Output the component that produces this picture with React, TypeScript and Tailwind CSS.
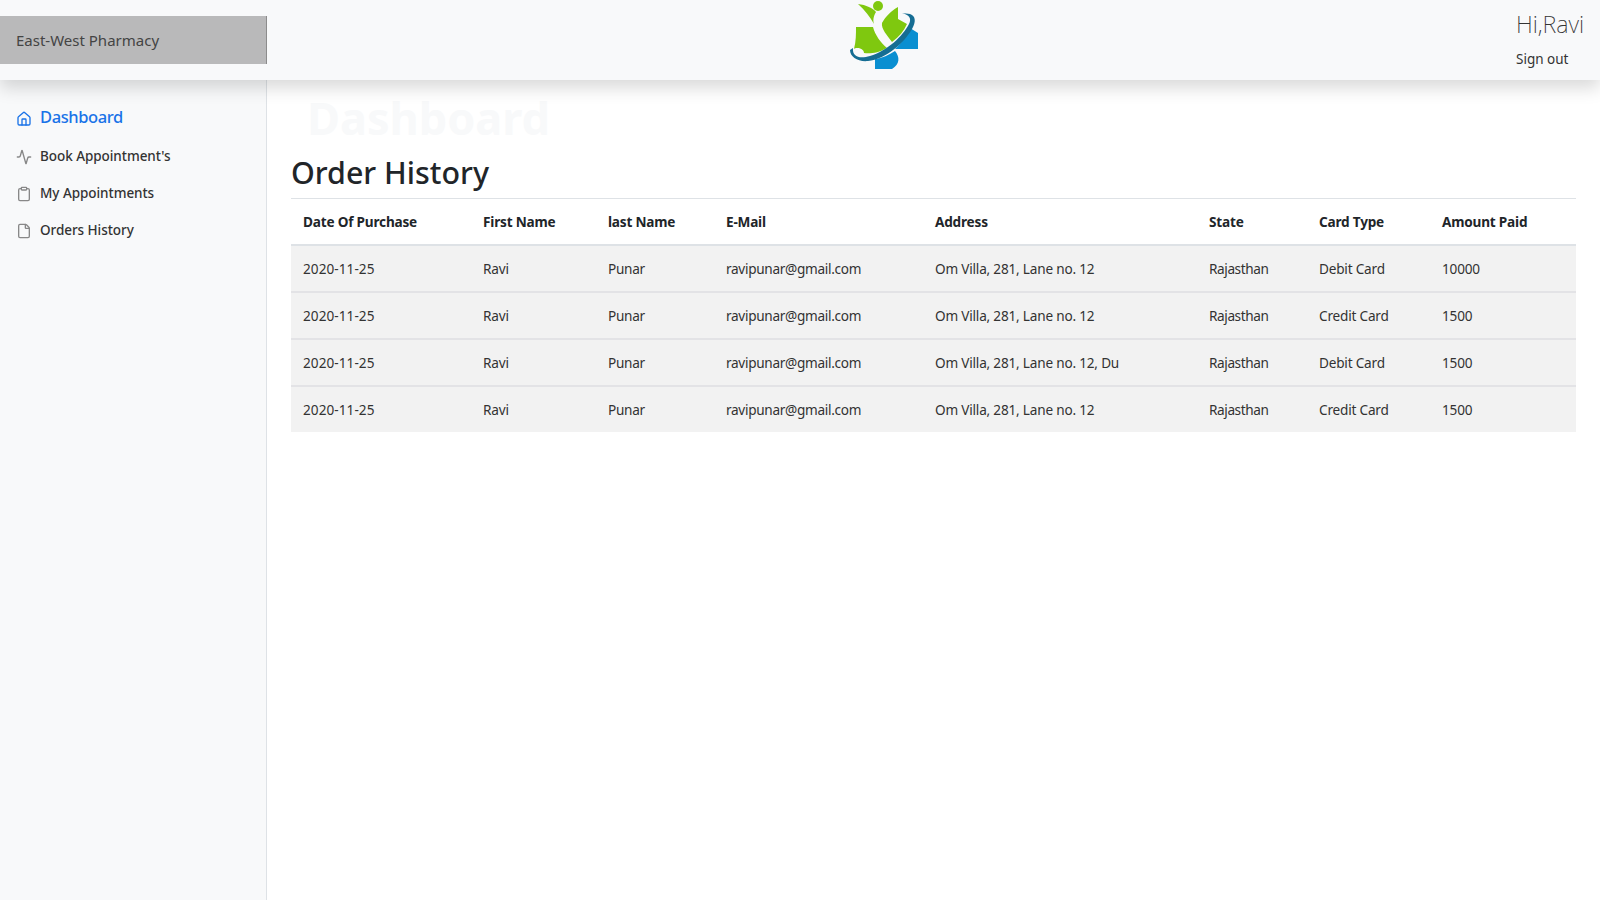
import { Activity, Clipboard, File, Home } from "lucide-react";

const orders = [
  { address: "Om Villa, 281, Lane no. 12", card: "Debit Card", amount: "10000" },
  { address: "Om Villa, 281, Lane no. 12", card: "Credit Card", amount: "1500" },
  { address: "Om Villa, 281, Lane no. 12, Du", card: "Debit Card", amount: "1500" },
  { address: "Om Villa, 281, Lane no. 12", card: "Credit Card", amount: "1500" },
];

const headers = ["Date Of Purchase", "First Name", "last Name", "E-Mail", "Address", "State", "Card Type", "Amount Paid"];

const Logo = () => (
  <svg width="110" height="85" viewBox="0 0 110 85">
    <circle cx="58" cy="7" r="5" fill="#7fc80f" />
    <path d="M38 5 C46 6 53 9 56 13 C53 18 53 22 54 25 C50 18 45 11 38 5Z" fill="#7fc80f" />
    <path d="M36 28 L53 28 C55 36 61 44 67 49 C58 54 50 55 44 54 C44 49 36 48 34 50 C36 42 36 35 36 28Z" fill="#7fc80f" />
    <path d="M62 24 C66 17 71 12 78 8 L78 20 L87 25 C84 32 79 38 72 43 C67 36 61 30 62 24Z" fill="#7fc80f" />
    <path d="M90 29 L98 34 L98 50 L75 50 C81 44 87 37 90 29Z" fill="#0a8fd1" />
    <path d="M55 60 C62 59 69 56 75 52 C80 58 80 65 72 70 L55 70Z" fill="#0a8fd1" />
    <path d="M30 51 C30 58 38 63 48 62 C66 60 84 44 92 30 C96 23 96 17 90 15 L82 14 C89 16 92 19 89 25 C83 37 67 52 50 57 C40 60 32 58 33 49Z" fill="#156d93" />
  </svg>
);

const SideLink = ({ icon, label, active }: { icon: React.ReactNode; label: string; active?: boolean }) => (
  <a
    className={
      active
        ? "flex items-center h-[36px] mb-[3px] pl-4 text-[16.5px] font-medium tracking-[-0.4px] text-[#1a73e8]"
        : "flex items-center h-[37px] pl-4 text-[13.5px] font-medium tracking-[-0.05px] text-[#333]"
    }
  >
    <span className={active ? "w-[24px] mt-[3px] text-[#1a73e8]" : "w-[24px] mt-[1px] text-[#888]"}>{icon}</span>
    {label}
  </a>
);

export default function App() {
  return (
    <div className="flex flex-col h-[900px] overflow-hidden bg-white font-['Noto_Sans',sans-serif] text-[#212529]">
      <header className="relative z-10 flex h-[80px] shrink-0 items-center bg-[#f8f9fa] shadow-[0_8px_16px_rgba(0,0,0,0.15)]">
        <div className="flex h-[48px] w-[267px] items-center border-r border-[#8c8c8c] bg-[#b9b9ba] pl-4 text-[15px] text-[#444]">
          East-West Pharmacy
        </div>
        <div className="flex flex-1 justify-center pt-[2px] pr-[34px]">
          <Logo />
        </div>
        <div className="w-[84px] shrink-0 pb-[4px]">
          <p className="text-[23.5px] font-extralight leading-[34px] text-[#333]">Hi,Ravi</p>
          <p className="mt-[8px] text-[13.5px] leading-[21px] text-[#333]">Sign out</p>
        </div>
      </header>

      <div className="flex flex-1">
        <nav className="w-[267px] shrink-0 border-r border-[#dee2e6] bg-[#f8f9fa] pt-[19px]">
          <SideLink active icon={<Home size={16} />} label="Dashboard" />
          <SideLink icon={<Activity size={16} />} label="Book Appointment's" />
          <SideLink icon={<Clipboard size={16} />} label="My Appointments" />
          <SideLink icon={<File size={16} />} label="Orders History" />
        </nav>

        <main className="flex-1 pl-[24px] pr-[24px]">
          <p className="pl-4 pt-[8px] text-[45px] font-bold leading-[60px] text-[#f8f9fa]">Dashboard</p>
          <h2 className="border-b border-[#dee2e6] pt-[1px] pb-[1px] text-[30.4px] font-medium leading-[48px]">Order History</h2>
          <table className="w-[1285px] table-fixed border-collapse text-[13.6px] tracking-[-0.2px]">
            <colgroup>
              <col className="w-[180px]" />
              <col className="w-[125px]" />
              <col className="w-[118px]" />
              <col className="w-[209px]" />
              <col className="w-[274px]" />
              <col className="w-[110px]" />
              <col className="w-[123px]" />
              <col className="w-[146px]" />
            </colgroup>
            <thead>
              <tr className="border-b-2 border-[#dee2e6]">
                {headers.map((h) => (
                  <th key={h} className="h-[46px] px-3 pt-[2px] text-left font-bold">
                    {h}
                  </th>
                ))}
              </tr>
            </thead>
            <tbody className="text-[#333]">
              {orders.map((o, i) => (
                <tr key={i} className="h-[47px] border-t-2 border-[#e3e3e6] bg-[#f2f2f2] first:border-t-0 last:h-[46px]">
                  <td className="px-3 pt-[2px] tracking-[0.05px]">2020-11-25</td>
                  <td className="px-3 pt-[2px]">Ravi</td>
                  <td className="px-3 pt-[2px] tracking-[-0.3px]">Punar</td>
                  <td className="px-3 pt-[2px] tracking-[-0.3px]">ravipunar@gmail.com</td>
                  <td className="px-3 pt-[2px] whitespace-nowrap">{o.address}</td>
                  <td className="px-3 pt-[2px] tracking-[-0.4px]">Rajasthan</td>
                  <td className="px-3 pt-[2px]">{o.card}</td>
                  <td className="px-3 pt-[2px]">{o.amount}</td>
                </tr>
              ))}
            </tbody>
          </table>
        </main>
      </div>
    </div>
  );
}
